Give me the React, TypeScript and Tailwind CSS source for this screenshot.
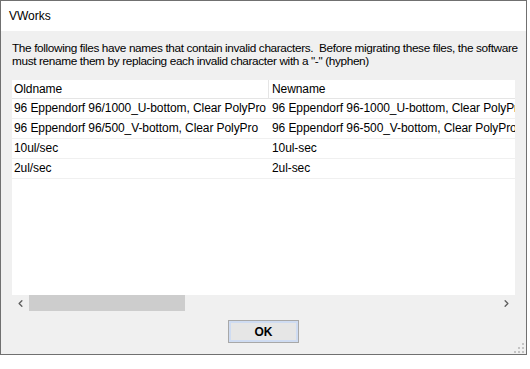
import { ChevronLeft, ChevronRight } from "lucide-react"

const rows = [
  ["96 Eppendorf 96/1000_U-bottom, Clear PolyPro", "96 Eppendorf 96-1000_U-bottom, Clear PolyPro"],
  ["96 Eppendorf 96/500_V-bottom, Clear PolyPro", "96 Eppendorf 96-500_V-bottom, Clear PolyPro"],
  ["10ul/sec", "10ul-sec"],
  ["2ul/sec", "2ul-sec"],
]

function Grip() {
  const dots = [
    [8, 0],
    [4, 4],
    [8, 4],
    [0, 8],
    [4, 8],
    [8, 8],
  ]
  return (
    <svg width="11" height="11" viewBox="0 0 11 11" className="shrink-0">
      {dots.map(([x, y]) => (
        <rect key={`${x}-${y}`} x={x} y={y} width="2" height="2" fill="#c4c4c4" />
      ))}
    </svg>
  )
}

export default function App() {
  return (
    <div
      className="w-[530px] h-[369px] bg-white text-black overflow-hidden"
      style={{ fontFamily: '"Liberation Sans", Arial, sans-serif' }}
    >
      <div className="w-[527px] h-[355px] border border-[#707070] flex flex-col bg-[#f0f0f0]">
        {/* title bar */}
        <div className="h-[30px] bg-white flex items-center px-[8px] text-[12px] shrink-0">VWorks</div>

        <div className="flex-1 flex flex-col px-[11px] pt-[11px]">
          <p className="text-[11.8px] leading-[13px] tracking-[-0.36px] whitespace-nowrap">
            The following files have names that contain invalid characters.&nbsp; Before migrating these files, the
            software
            <br />
            must rename them by replacing each invalid character with a "-" (hyphen)
          </p>

          {/* list view */}
          <div className="mt-[12px] w-[503px] h-[231px] bg-white flex flex-col">
            <div className="flex-1 overflow-hidden text-[12px] tracking-[-0.08px]">
              <div className="flex h-[19px] border-b border-[#e5e5e5] whitespace-nowrap">
                <div className="w-[257px] shrink-0 border-r border-[#e5e5e5] pl-[2px] leading-[18px]">Oldname</div>
                <div className="w-[300px] shrink-0 pl-[3px] leading-[18px]">Newname</div>
              </div>
              {rows.map(([oldName, newName]) => (
                <div key={oldName} className="flex h-[20px] border-b border-[#f0f0f0] whitespace-nowrap">
                  <div className="w-[257px] shrink-0 pl-[2px] leading-[19px] overflow-hidden">{oldName}</div>
                  <div className="w-[300px] shrink-0 pl-[3px] leading-[19px]">{newName}</div>
                </div>
              ))}
            </div>

            {/* horizontal scrollbar */}
            <div className="h-[16px] bg-[#f0f0f0] flex items-center shrink-0">
              <div className="w-[17px] h-full flex items-center justify-center text-[#606060]">
                <ChevronLeft size={11} strokeWidth={3} />
              </div>
              <div className="w-[156px] h-full bg-[#cdcdcd]" />
              <div className="flex-1" />
              <div className="w-[17px] h-full flex items-center justify-center text-[#606060]">
                <ChevronRight size={11} strokeWidth={3} />
              </div>
            </div>
          </div>

          <div className="flex justify-center mt-[9px]">
            <button
              type="button"
              className="w-[71px] h-[23px] border border-[#a8a8a8] bg-[#e6e6e6] text-[12px] font-bold flex items-center justify-center ring-2 ring-inset ring-[#cfdcf2]"
            >
              OK
            </button>
          </div>

          <div className="flex-1 flex justify-end items-end -mr-[10px] pb-[1px]">
            <Grip />
          </div>
        </div>
      </div>
    </div>
  )
}
